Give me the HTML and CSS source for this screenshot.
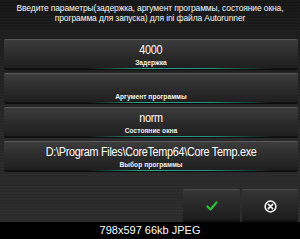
FILE: index.html
```html
<!DOCTYPE html>
<html>
<head>
<meta charset="utf-8">
<link rel="stylesheet" href="styles.css">
</head>
<body>
<div class="screen">
  <div class="header">
    <div class="title">Введите параметры(задержка, аргумент программы, состояние окна,<br>программа для запуска) для ini файла Autorunner</div>
  </div>
  <div class="list">
    <div class="card"><div class="value">4000</div><div class="label">Задержка</div><div class="line"></div></div>
    <div class="card"><div class="value"></div><div class="label">Аргумент программы</div><div class="line"></div></div>
    <div class="card"><div class="value">norm</div><div class="label">Состояние окна</div><div class="line"></div></div>
    <div class="card"><div class="value">D:\Program Files\CoreTemp64\Core Temp.exe</div><div class="label">Выбор программы</div><div class="line"></div></div>
  </div>
  <div class="actions">
    <div class="btn ok">
      <svg width="12" height="10" viewBox="0 0 12 10"><path d="M1.5 5.5 L4.5 8.5 L10.5 1.5" fill="none" stroke="#2fc12f" stroke-width="2.2" stroke-linecap="round" stroke-linejoin="round"/></svg>
    </div>
    <div class="btn cancel">
      <svg width="13" height="13" viewBox="0 0 14 14"><circle cx="7" cy="7" r="5.8" fill="none" stroke="#fff" stroke-width="1.6"/><path d="M4.7 4.7 L9.3 9.3 M9.3 4.7 L4.7 9.3" stroke="#fff" stroke-width="1.6" stroke-linecap="round"/></svg>
    </div>
  </div>
  <div class="footer">798x597 66kb JPEG</div>
</div>
</body>
</html>
```

FILE: styles.css
```css
html, body {
  margin: 0;
  padding: 0;
  background: #000;
}
.screen {
  width: 300px;
  height: 239px;
  display: flex;
  flex-direction: column;
  font-family: "Liberation Sans", Arial, sans-serif;
  color: #fff;
  background:
    repeating-linear-gradient(180deg, rgba(255,255,255,0.02) 0px, rgba(255,255,255,0.02) 1px, rgba(0,0,0,0.03) 2px, rgba(0,0,0,0) 3px),
    linear-gradient(180deg, #151515 0px, #1c1c1c 36px, #262626 120px, #2b2b2b 222px);
}
.header {
  height: 35px;
  box-sizing: border-box;
  padding-top: 3px;
  display: flex;
  justify-content: center;
}
.title {
  font-size: 8.5px;
  line-height: 10px;
  text-align: center;
  letter-spacing: -0.12px;
  color: #f4f4f4;
}
.list {
  display: flex;
  flex-direction: column;
  gap: 4px;
  padding: 4px 2px 0 4px;
}
.card {
  height: 30px;
  box-sizing: border-box;
  border-radius: 2px;
  border-top: 1px solid #5a5a5a;
  background: linear-gradient(180deg, #3c3c3c 0%, #2e2e2e 40%, #1e1e1e 100%);
  box-shadow: 0 1px 0 #0c0c0c, inset 0 -1px 0 #111;
  display: flex;
  flex-direction: column;
  align-items: center;
  padding-top: 4px;
}
.value {
  height: 13px;
  font-size: 12px;
  line-height: 13px;
  letter-spacing: -0.3px;
  white-space: nowrap;
  transform: scaleX(0.9);
  color: #fff;
}
.label {
  margin-top: 2px;
  height: 8px;
  font-size: 6.7px;
  line-height: 8px;
  font-weight: bold;
  color: #f0f0f0;
}
.line {
  margin-top: 1px;
  width: 100%;
  height: 1px;
  background: linear-gradient(90deg, rgba(40,150,130,0) 28%, #2fa88f 48%, #27907c 70%, rgba(40,150,130,0) 92%);
}
.actions {
  margin-top: 18px;
  display: flex;
  justify-content: flex-end;
  gap: 2px;
  padding-right: 2px;
}
.btn {
  height: 33px;
  box-sizing: border-box;
  border-radius: 2px;
  border-top: 1px solid #4e4e4e;
  background: linear-gradient(180deg, #363636 0%, #2a2a2a 40%, #1b1b1b 100%);
  box-shadow: inset 0 -2px 0 #111;
  display: flex;
  align-items: center;
  justify-content: center;
}
.ok { width: 57px; }
.cancel { width: 56px; }
.footer {
  margin-top: auto;
  height: 17px;
  background: #000;
  font-size: 11px;
  line-height: 17px;
  text-align: center;
  color: #fff;
}
```
